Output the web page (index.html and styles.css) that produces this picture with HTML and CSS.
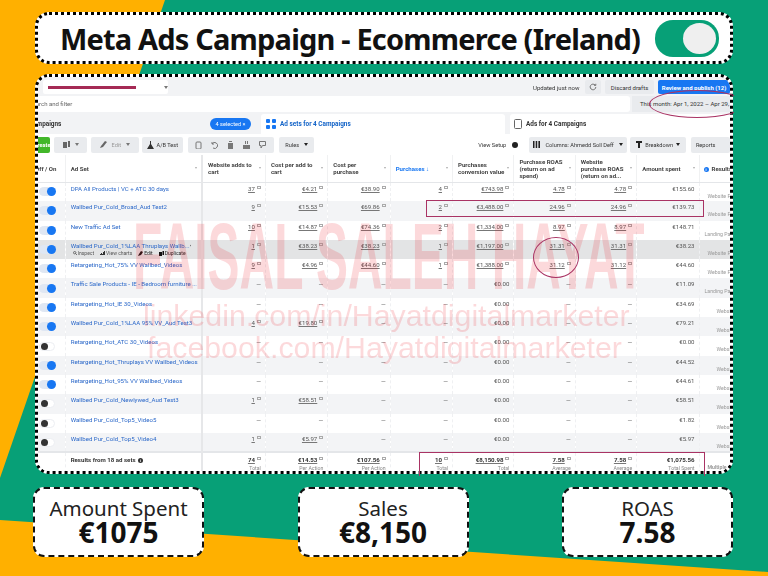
FILE: index.html
```html
<!DOCTYPE html>
<html lang="en">
<head>
    <meta charset="UTF-8">
    <meta name="viewport" content="width=device-width, initial-scale=1.0">
    <title>Meta Ads Campaign - Ecommerce (Ireland)</title>
    <link rel="stylesheet" href="styles.css">
</head>
<body>
    <div class="backdrop"></div>
    <div class="page">
        <!-- Title -->
        <header class="title-card">
            <h1>Meta Ads Campaign - Ecommerce (Ireland)</h1>
            <div class="big-toggle"><span></span></div>
        </header>

        <!-- Ads manager screenshot -->
        <section class="shot">
            <div class="shot-inner">
                <div class="topbar">
                    <div class="account"><span class="account-name"></span><span class="caret"></span></div>
                    <span class="updated">Updated just now</span>
                    <span class="btn refresh">
                        <svg width="8" height="8" viewBox="0 0 10 10"><path d="M8.5 5a3.5 3.5 0 1 1-1-2.5M8.5 1v2h-2" fill="none" stroke="#555" stroke-width="1"/></svg>
                    </span>
                    <span class="btn discard">Discard drafts</span>
                    <span class="btn publish">Review and publish (12)</span>
                </div>
                <div class="searchbar">
                    <div class="search">Search and filter</div>
                    <div class="daterange">This month: Apr 1, 2022 – Apr 29, 2022</div>
                </div>
                <div class="tabs">
                    <div class="tab tab-campaigns"><b>Campaigns</b><span class="chip">4 selected ×</span></div>
                    <div class="tab tab-active">
                        <svg width="10" height="10" viewBox="0 0 10 10" fill="#1877f2"><rect width="4" height="4" rx="1"/><rect x="6" width="4" height="4" rx="1"/><rect y="6" width="4" height="4" rx="1"/><rect x="6" y="6" width="4" height="4" rx="1"/></svg>
                        <b>Ad sets for 4 Campaigns</b>
                    </div>
                    <div class="tab tab-ads">
                        <svg width="8" height="10" viewBox="0 0 8 10"><rect x=".5" y=".5" width="7" height="9" rx="1" fill="none" stroke="#666"/></svg>
                        <b>Ads for 4 Campaigns</b>
                    </div>
                </div>
                <div class="toolbar">
                    <span class="btn create">Create</span>
                    <span class="btn w-copy">
                        <svg width="7" height="8" viewBox="0 0 7 8"><path d="M0 1h4v6H0zM5 0h2v6H5z" fill="#666"/></svg><span class="caret"></span>
                    </span>
                    <span class="btn w-edit">
                        <svg width="7" height="7" viewBox="0 0 7 7"><path d="M0 7l1-2 4-5 2 1-4 5z" fill="#666"/></svg><em>Edit</em><span class="caret"></span>
                    </span>
                    <span class="btn w-ab">
                        <svg width="7" height="8" viewBox="0 0 7 8"><path d="M3 0h1v3l3 5H0l3-5z" fill="#333"/></svg>A/B Test
                    </span>
                    <span class="btn w-icons">
                        <svg width="7" height="8" viewBox="0 0 7 8"><rect x="1" y="1" width="5" height="7" rx="1" fill="none" stroke="#777"/></svg>
                        <svg width="7" height="8" viewBox="0 0 7 8"><path d="M1 3a3 3 0 1 1 1 4M1 1v2h2" fill="none" stroke="#777"/></svg>
                        <svg width="7" height="8" viewBox="0 0 7 8"><path d="M1 2h5v6H1zM2 0h3v1H2z" fill="#777"/></svg>
                        <svg width="7" height="8" viewBox="0 0 7 8"><path d="M0 4h7v4H0zM2 0h1v3H2zM4 0h1v3H4z" fill="#777"/></svg>
                        <svg width="7" height="8" viewBox="0 0 7 8"><path d="M.5.5h6v4h-3L2 7V4.500H.5z" fill="none" stroke="#777"/></svg>
                    </span>
                    <span class="btn w-rules">Rules<span class="caret dark"></span></span>
                    <span class="view-setup">View Setup</span>
                    <span class="mini-toggle"><span></span></span>
                    <span class="btn w-columns">
                        <svg width="7" height="7" viewBox="0 0 7 7"><path d="M0 0h1.500v7H0zM2.700 0h1.500v7H2.700zM5.400 0H7v7H5.400z" fill="#222"/></svg>Columns: Ahmedd Soll Deff<span class="caret dark"></span>
                    </span>
                    <span class="btn w-breakdown">
                        <svg width="6" height="7" viewBox="0 0 6 7"><path d="M0 0h6v2H4v5H2V2H0z" fill="#222"/></svg>Breakdown<span class="caret dark"></span>
                    </span>
                    <span class="btn w-reports">Reports</span>
                </div>

                <table class="report">
                    <colgroup>
                        <col class="c-toggle"><col class="c-name"><col class="c-63"><col class="c-62"><col class="c-62"><col class="c-62"><col class="c-61"><col class="c-61"><col class="c-61"><col class="c-62"><col class="c-results">
                    </colgroup>
                    <thead>
                        <tr>
                            <th class="clip-left">Off / On</th>
                            <th class="sort">Ad Set</th>
                            <th class="sort divider">Website adds to cart</th>
                            <th class="sort">Cost per add to cart</th>
                            <th class="sort">Cost per purchase</th>
                            <th class="sort active">Purchases ↓</th>
                            <th class="sort">Purchases conversion value</th>
                            <th class="sort">Purchase ROAS (return on ad spend)</th>
                            <th class="sort">Website purchase ROAS (return on ad...</th>
                            <th class="sort">Amount spent</th>
                            <th class="results-head"><span class="info">i</span>Results</th>
                        </tr>
                    </thead>
                    <tbody>
                        <tr><td><span class="sw on"></span></td><td class="name">DPA All Products | VC + ATC 30 days</td><td class="divider"><u>37</u><i></i></td><td><u>€4.21</u><i></i></td><td><u>€38.90</u><i></i></td><td><u>4</u><i></i></td><td><u>€743.98</u><i></i></td><td><u>4.78</u><i></i></td><td><u>4.78</u><i></i></td><td>€155.60</td><td class="res res-a">Website Purchases</td></tr>
                        <tr><td><span class="sw on"></span></td><td class="name">Wallbed Pur_Cold_Broad_Aud Test2</td><td class="divider"><u>9</u><i></i></td><td><u>€15.53</u><i></i></td><td><u>€69.86</u><i></i></td><td><u>2</u><i></i></td><td><u>€3,488.00</u><i></i></td><td><u>24.96</u><i></i></td><td><u>24.96</u><i></i></td><td>€139.73</td><td class="res res-a">Website Purchases</td></tr>
                        <tr><td><span class="sw on"></span></td><td class="name">New Traffic Ad Set</td><td class="divider"><u>10</u><i></i></td><td><u>€14.87</u><i></i></td><td><u>€74.36</u><i></i></td><td><u>2</u><i></i></td><td><u>€1,334.00</u><i></i></td><td><u>8.97</u><i></i></td><td><u>8.97</u><i></i></td><td>€148.71</td><td class="res res-b">Landing Page Views</td></tr>
                        <tr class="hovered"><td><span class="sw on"></span></td><td class="name"><div class="name-line">Wallbed Pur_Cold_1%LAA Thruplays Wallb...<svg width="5" height="5" viewBox="0 0 5 5"><path d="M0 5l1-2 2-3 2 1-2 3z" fill="#222"/></svg></div>
                            <div class="row-actions">
                                <span><svg width="4" height="4" viewBox="0 0 4 4"><circle cx="1.700" cy="1.700" r="1.200" fill="none" stroke="#444" stroke-width=".7"/><path d="M2.600 2.600L4 4" stroke="#444" stroke-width=".7"/></svg>Inspect</span>
                                <span><svg width="5" height="4" viewBox="0 0 5 4"><path d="M0 4V3h1V2h1V3h1V1h1V0h1v4z" fill="#333"/></svg>View charts</span>
                                <span class="dark"><svg width="5" height="5" viewBox="0 0 5 5"><path d="M0 5l1-2 2-3 2 1-2 3z" fill="#111"/></svg>Edit</span>
                                <span class="dark"><svg width="5" height="5" viewBox="0 0 5 5"><path d="M0 1h3v4H0zM3.500 0H5v4H3.500z" fill="#111"/></svg>Duplicate</span>
                            </div></td><td class="divider"><u>1</u><i></i></td><td><u>€38.23</u><i></i></td><td><u>€38.23</u><i></i></td><td><u>1</u><i></i></td><td><u>€1,197.00</u><i></i></td><td><u>31.31</u><i></i></td><td><u>31.31</u><i></i></td><td>€38.23</td><td class="res res-a">Website Purchases</td></tr>
                        <tr><td><span class="sw on"></span></td><td class="name">Retargeting_Hot_75% VV Wallbed_Videos</td><td class="divider"><u>9</u><i></i></td><td><u>€4.96</u><i></i></td><td><u>€44.60</u><i></i></td><td><u>1</u><i></i></td><td><u>€1,388.00</u><i></i></td><td><u>31.12</u><i></i></td><td><u>31.12</u><i></i></td><td>€44.60</td><td class="res res-a">Website Purchases</td></tr>
                        <tr><td><span class="sw on"></span></td><td class="name">Traffic Sale Products - IE - Bedroom furniture ...</td><td class="divider">—</td><td>—</td><td>—</td><td>—</td><td>€0.00</td><td>—</td><td>—</td><td>€11.09</td><td class="res res-b">Landing Page Views</td></tr>
                        <tr><td><span class="sw on"></span></td><td class="name">Retargeting_Hot_IE 30_Videos</td><td class="divider">—</td><td>—</td><td>—</td><td>—</td><td>€0.00</td><td>—</td><td>—</td><td>€34.69</td><td class="res res-c">Website</td></tr>
                        <tr><td><span class="sw on"></span></td><td class="name">Wallbed Pur_Cold_1%LAA 95% VV_Aud Test3</td><td class="divider"><u>4</u><i></i></td><td><u>€19.80</u><i></i></td><td>—</td><td>—</td><td>€0.00</td><td>—</td><td>—</td><td>€79.21</td><td class="res res-c">Website</td></tr>
                        <tr><td><span class="sw"></span></td><td class="name">Retargeting_Hot_ATC 30_Videos</td><td class="divider">—</td><td>—</td><td>—</td><td>—</td><td>€0.00</td><td>—</td><td>—</td><td>€0.00</td><td class="res res-c">Website</td></tr>
                        <tr><td><span class="sw on"></span></td><td class="name">Retargeting_Hot_Thruplays VV Wallbed_Videos</td><td class="divider">—</td><td>—</td><td>—</td><td>—</td><td>€0.00</td><td>—</td><td>—</td><td>€44.52</td><td class="res res-c">Website</td></tr>
                        <tr><td><span class="sw on"></span></td><td class="name">Retargeting_Hot_95% VV Wallbed_Videos</td><td class="divider">—</td><td>—</td><td>—</td><td>—</td><td>€0.00</td><td>—</td><td>—</td><td>€44.61</td><td class="res res-c">Website</td></tr>
                        <tr><td><span class="sw"></span></td><td class="name">Wallbed Pur_Cold_Newlywed_Aud Test3</td><td class="divider"><u>1</u><i></i></td><td><u>€58.51</u><i></i></td><td>—</td><td>—</td><td>€0.00</td><td>—</td><td>—</td><td>€58.51</td><td class="res res-c">Website</td></tr>
                        <tr><td><span class="sw"></span></td><td class="name">Wallbed Pur_Cold_Top5_Video5</td><td class="divider">—</td><td>—</td><td>—</td><td>—</td><td>€0.00</td><td>—</td><td>—</td><td>€1.82</td><td class="res res-c">Website</td></tr>
                        <tr><td><span class="sw"></span></td><td class="name">Wallbed Pur_Cold_Top5_Video4</td><td class="divider"><u>1</u><i></i></td><td><u>€5.97</u><i></i></td><td>—</td><td>—</td><td>€0.00</td><td>—</td><td>—</td><td>€5.97</td><td class="res res-c">Website</td></tr>
                    </tbody>
                    <tfoot>
                        <tr>
                            <td></td>
                            <td class="name">Results from 18 ad sets <span class="info dark">i</span></td>
                            <td class="divider"><u>74</u><i></i><small>Total</small></td>
                            <td><u>€14.53</u><i></i><small>Per Action</small></td>
                            <td><u>€107.56</u><i></i><small>Per Action</small></td>
                            <td><u>10</u><i></i><small>Total</small></td>
                            <td><u>€8,150.98</u><i></i><small>Total</small></td>
                            <td><u>7.58</u><i></i><small>Average</small></td>
                            <td><u>7.58</u><i></i><small>Average</small></td>
                            <td>€1,075.56<small>Total Spent</small></td>
                            <td class="res res-d">Multiple</td>
                        </tr>
                    </tfoot>
                </table>
            </div>

            <!-- Watermark and hand-drawn marks, over the screenshot -->
            <div class="wm wm-name">FAISAL SALEH HAYAT</div>
            <div class="wm wm-link wm-linkedin">linkedin.com/in/Hayatdigitalmarketer</div>
            <div class="wm wm-link wm-facebook">facebook.com/Hayatdigitalmarketer</div>
            <div class="mark mark-date"></div>
            <div class="mark mark-row"></div>
            <div class="mark mark-circle"></div>
            <div class="mark mark-total"></div>
        </section>

        <!-- Summary -->
        <div class="stats">
            <div class="stat"><span>Amount Spent</span><strong>€1075</strong></div>
            <div class="stat"><span>Sales</span><strong>€8,150</strong></div>
            <div class="stat"><span>ROAS</span><strong>7.58</strong></div>
        </div>
    </div>
</body>
</html>
```

FILE: styles.css
```css
* {
    box-sizing: border-box;
}
html, body {
    margin: 0;
    padding: 0;
    height: 100%;
}
body {
    position: relative;
    overflow: hidden;
    font-family: "Roboto", sans-serif;
    background-color: #ffb000;
    color: #111;
}
.backdrop {
    position: absolute;
    inset: 0;
    background-color: #07a077;
    clip-path: polygon(165px 0, 768px 0, 768px 572px, 0 520px, 0 478px);
}
.page {
    position: relative;
    display: flex;
    flex-direction: column;
    padding: 12px 35px 0;
}

/* title */
.title-card {
    height: 52px;
    display: flex;
    align-items: center;
    padding-left: 22px;
    background-color: #fff;
    border: 3px dotted #000;
    border-radius: 14px;
}
.title-card h1 {
    margin: 0;
    width: 595px;
    font-family: "Noto Sans", sans-serif;
    font-size: 29px;
    font-weight: 700;
    letter-spacing: -0.82px;
    white-space: nowrap;
}
.big-toggle {
    width: 64px;
    height: 37px;
    padding: 3px 3px 3px 28px;
    background-color: #07a077;
    border-radius: 18px;
}
.big-toggle span {
    display: block;
    height: 31px;
    background-color: #efefef;
    border-radius: 50%;
}

/* screenshot card */
.shot {
    position: relative;
    height: 400px;
    margin-top: 10px;
    border: 3px dotted #000;
    border-radius: 14px;
    background-color: #fff;
}
.shot-inner {
    height: 100%;
    overflow: hidden;
    border-radius: 11px;
    background-color: #f2f3f5;
    filter: blur(0.5px);
    font-size: 6px;
    color: #333;
}
.topbar {
    height: 19px;
    display: flex;
    align-items: center;
    padding: 1px 0 0 5px;
}
.account {
    width: 125px;
    height: 14px;
    display: flex;
    align-items: center;
    gap: 28px;
    padding-left: 5px;
    background-color: #fff;
    border-radius: 2px;
}
.account-name {
    width: 92px;
    height: 3px;
    background-color: #a52a55;
}
.caret {
    display: inline-block;
    width: 0;
    height: 0;
    border-left: 2px solid transparent;
    border-right: 2px solid transparent;
    border-top: 3px solid #777;
}
.caret.dark {
    border-top-color: #222;
}
.btn {
    display: inline-flex;
    align-items: center;
    justify-content: center;
    height: 14px;
    background-color: #e9ebee;
    border-radius: 2px;
    white-space: nowrap;
}
.updated {
    margin-left: 365px;
    width: 53px;
}
.refresh {
    width: 16px;
}
.discard {
    width: 50px;
    margin-left: 4px;
}
.publish {
    width: 73px;
    margin-left: 4px;
    background-color: #1877f2;
    color: #fff;
    font-weight: 700;
}
.searchbar {
    height: 16px;
    display: flex;
    gap: 2px;
    margin-bottom: 2px;
}
.search {
    width: 592px;
    padding-left: 0;
    line-height: 15px;
    background-color: #fff;
    border-radius: 0 3px 3px 0;
    text-indent: -9px;
    overflow: hidden;
    color: #666;
}
.daterange {
    flex: 1;
    padding-left: 8px;
    line-height: 15px;
    background-color: #e9ebee;
    white-space: nowrap;
    overflow: hidden;
}
.tabs {
    height: 20px;
    display: flex;
    align-items: stretch;
}
.tab {
    display: flex;
    align-items: center;
    gap: 4px;
    font-size: 6.4px;
}
.tab-campaigns {
    width: 223px;
    justify-content: space-between;
    padding-right: 10px;
    text-indent: -9px;
    overflow: hidden;
}
.chip {
    width: 41px;
    height: 12px;
    line-height: 12px;
    text-indent: 0;
    text-align: center;
    color: #fff;
    background-color: #1877f2;
    border-radius: 6px;
    font-size: 5.6px;
}
.tab-active {
    width: 244px;
    padding-left: 5px;
    background-color: #fff;
    border-radius: 3px 3px 0 0;
    color: #1464c8;
}
.tab-ads {
    flex: 1;
    margin-left: 5px;
    padding-left: 4px;
    background-color: #fff;
    border-radius: 3px 3px 0 0;
}
.toolbar {
    height: 21px;
    display: flex;
    align-items: center;
    background-color: #fff;
    font-size: 5.6px;
    white-space: nowrap;
    overflow: hidden;
}
.toolbar .btn {
    height: 16px;
    gap: 5px;
}
.toolbar em {
    font-style: normal;
    color: #999;
}
.create {
    width: 13px;
    padding-right: 0;
    background-color: #42b72a;
    color: #fff;
    font-weight: 700;
    justify-content: flex-end !important;
    border-radius: 0 2px 2px 0;
    overflow: hidden;
}
.w-copy {
    width: 34px;
    margin-left: 4px;
}
.w-edit {
    width: 50px;
    margin-left: 4px;
}
.w-ab {
    width: 43px;
    margin-left: 3px;
    gap: 3px !important;
}
.w-icons {
    width: 90px;
    margin-left: 5px;
    gap: 9px !important;
}
.w-rules {
    width: 37px;
    margin-left: 5px;
}
.view-setup {
    width: 33px;
    margin-left: 164px;
}
.mini-toggle {
    width: 15px;
    height: 12px;
    padding: 3px 0 0 2px;
    background-color: #fff;
    border-radius: 6px;
}
.mini-toggle span {
    display: block;
    width: 6px;
    height: 6px;
    background-color: #222;
    border-radius: 50%;
}
.w-columns {
    width: 102px;
    margin-left: 5px;
}
.w-breakdown {
    width: 59px;
    margin-left: 3px;
    gap: 3px !important;
}
.w-reports {
    width: 40px;
    margin-left: 5px;
    padding-right: 10px;
}

/* report table */
.report {
    width: 722px;
    table-layout: fixed;
    border-collapse: collapse;
    background-color: #fff;
    font-size: 6.1px;
}
.c-toggle { width: 27px; }
.c-name { width: 136px; }
.c-63 { width: 63px; }
.c-62 { width: 62px; }
.c-61 { width: 61px; }
.c-results { width: 60px; }
.report th {
    height: 27px;
    padding: 0 9px 0 5px;
    text-align: left;
    font-weight: 700;
    line-height: 7px;
    color: #444;
    border-right: 1px solid #f0f1f2;
    border-bottom: 1px solid #e4e6e9;
    position: relative;
}
.report th.clip-left {
    padding: 0;
    text-indent: -3px;
    overflow: hidden;
    white-space: nowrap;
}
.report th.sort::after {
    content: "";
    position: absolute;
    right: 4px;
    top: 12px;
    border-left: 1.5px solid transparent;
    border-right: 1.5px solid transparent;
    border-top: 2px solid #aaa;
}
.report th.active {
    color: #1877f2;
}
.report th.results-head {
    padding: 0 0 0 4px;
    white-space: nowrap;
    overflow: hidden;
}
.info {
    display: inline-block;
    width: 5px;
    height: 5px;
    margin-right: 3px;
    line-height: 5px;
    text-align: center;
    font-size: 4px;
    font-weight: 700;
    color: #fff;
    background-color: #1877f2;
    border-radius: 50%;
}
.info.dark {
    margin: 0 0 0 1px;
    background-color: #333;
}
.report td {
    height: 19.3px;
    padding: 2px 4px 0;
    vertical-align: top;
    text-align: right;
    line-height: 8px;
    color: #555;
    border-right: 1px dashed #eff0f2;
    white-space: nowrap;
    overflow: hidden;
}
.report tbody tr:nth-child(even) td {
    background-color: #f3f4f6;
}
.report tbody tr.hovered td {
    background-color: #e3e4e5;
}
.report .divider {
    border-left: 2px solid #e6e7e9;
}
.report u {
    text-decoration: underline;
    text-decoration-color: #777;
    text-underline-offset: 1px;
}
.report i {
    display: inline-block;
    width: 4px;
    height: 3px;
    margin-left: 2px;
    vertical-align: 2px;
    border: 1px solid #aaa;
}
.report td:first-child {
    padding: 0;
    vertical-align: middle;
}
.report td.name {
    padding-left: 5px;
    text-align: left;
    color: #2b68c9;
}
.name-line {
    display: flex;
    align-items: center;
    justify-content: space-between;
    padding-right: 6px;
}
.row-actions {
    display: flex;
    gap: 6px;
    padding: 0 0 0 2px;
    font-size: 5px;
    line-height: 7px;
    color: #555;
}
.row-actions span {
    display: flex;
    align-items: center;
    gap: 1px;
}
.row-actions .dark {
    color: #222;
}
.sw {
    display: block;
    position: relative;
    width: 16px;
    height: 9px;
    margin-left: 1px;
    background-color: #fff;
    border: 1px solid #eceef2;
    border-radius: 5px;
}
.sw::after {
    content: "";
    position: absolute;
    left: 1px;
    top: 0;
    width: 7px;
    height: 7px;
    background-color: #333;
    border-radius: 50%;
}
.sw.on {
    background-color: #dfe7f3;
    border-color: #dfe7f3;
}
.sw.on::after {
    left: 7px;
    top: -1px;
    width: 9px;
    height: 9px;
    background-color: #1877f2;
}
.report td.res {
    padding: 10px 0 0;
    text-align: left;
    font-size: 5.2px;
    line-height: 7px;
    color: #999;
    border-right: 0;
    overflow: visible;
}
.report td.res-a { padding-left: 8px; }
.report td.res-b { padding-left: 5px; }
.report td.res-c { padding-left: 17px; }
.report td.res-d { padding: 11px 0 0 8px; }
.report tfoot td {
    height: 21px;
    padding-top: 3px;
    font-weight: 700;
    color: #333;
    border-top: 2px solid #e4e6e9;
}
.report tfoot td.name {
    color: #333;
}
.report small {
    display: block;
    font-size: 5.2px;
    font-weight: 400;
    color: #888;
}

/* watermark and marks */
.wm {
    position: absolute;
    color: rgba(240, 30, 40, 0.17);
    white-space: nowrap;
    pointer-events: none;
}
.wm-name {
    left: 95px;
    top: 133px;
    font-family: "Liberation Sans", sans-serif;
    font-size: 94px;
    line-height: 94px;
    font-weight: 700;
    transform: scaleX(0.51);
    transform-origin: left top;
}
.wm-link {
    font-family: "Liberation Sans", sans-serif;
    font-size: 30.300px;
    line-height: 32px;
}
.wm-linkedin {
    left: 105px;
    top: 223px;
}
.wm-facebook {
    left: 109px;
    top: 255px;
}
.mark {
    position: absolute;
    border: 1.5px solid #a93364;
}
.mark-date {
    left: 611px;
    top: 13px;
    width: 96px;
    height: 28px;
    border-radius: 50%;
    clip-path: inset(0 11px 0 0);
}
.mark-row {
    left: 388px;
    top: 123px;
    width: 278px;
    height: 17px;
}
.mark-circle {
    left: 495px;
    top: 160px;
    width: 46px;
    height: 41px;
    border-radius: 50%;
}
.mark-total {
    left: 381px;
    top: 375px;
    width: 286px;
    height: 24px;
    border-bottom: 0;
}

/* summary cards */
.stats {
    display: flex;
    justify-content: space-between;
    margin: 13px 0 0 -2px;
}
.stat {
    width: 171px;
    height: 70px;
    display: flex;
    flex-direction: column;
    align-items: center;
    justify-content: center;
    padding-bottom: 4px;
    background-color: #fff;
    border: 2px dashed #111;
    border-radius: 11px;
    font-family: "Noto Sans", sans-serif;
}
.stat span {
    font-size: 20.500px;
    line-height: 24px;
    color: #222;
}
.stat strong {
    font-size: 28px;
    line-height: 24px;
    font-weight: 700;
}
```
